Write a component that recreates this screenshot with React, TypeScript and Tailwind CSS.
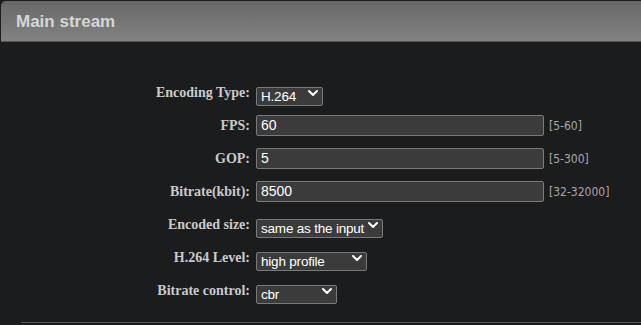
import React from 'react';

const Chevron = () => (
  <svg
    className="pointer-events-none absolute right-[5px] top-1/2 -translate-y-1/2"
    width="10"
    height="7"
    viewBox="0 0 10 7"
    fill="none"
  >
    <path d="M1 1.5 L5 5.5 L9 1.5" stroke="#ffffff" strokeWidth="2" strokeLinecap="round" strokeLinejoin="round" />
  </svg>
);

const Select = ({ value, width, options }: { value: string; width: string; options: string[] }) => (
  <div className={`relative ${width} h-[19px]`}>
    <select
      defaultValue={value}
      className="w-full h-full appearance-none bg-[#3b3b3b] border border-[#7a7a7a] rounded-[2px] text-white text-[13.5px] tracking-[-0.2px] leading-none pl-[4px] pr-[12px] font-['Liberation_Sans',Arial,sans-serif] outline-none"
    >
      {options.map((o) => (
        <option key={o} value={o}>
          {o}
        </option>
      ))}
    </select>
    <Chevron />
  </div>
);

const TextInput = ({ value, hint }: { value: string; hint: string }) => (
  <div className="flex items-center gap-[5px]">
    <input
      defaultValue={value}
      className="w-[288px] h-[21px] bg-[#3b3b3b] border border-[#7a7a7a] rounded-[2px] text-white text-[14px] px-[4px] font-['Liberation_Sans',Arial,sans-serif] outline-none"
    />
    <span className="text-[12px] text-[#a8a8a8] font-['DejaVu_Sans_Condensed','Open_Sans',sans-serif]">{hint}</span>
  </div>
);

const rows: { label: string; field: React.ReactNode }[] = [
  { label: 'Encoding Type:', field: <Select value="H.264" width="w-[67px]" options={['H.264', 'H.265']} /> },
  { label: 'FPS:', field: <TextInput value="60" hint="[5-60]" /> },
  { label: 'GOP:', field: <TextInput value="5" hint="[5-300]" /> },
  { label: 'Bitrate(kbit):', field: <TextInput value="8500" hint="[32-32000]" /> },
  {
    label: 'Encoded size:',
    field: <Select value="same as the input" width="w-[127px]" options={['same as the input', '1920x1080', '1280x720']} />,
  },
  {
    label: 'H.264 Level:',
    field: <Select value="high profile" width="w-[111px]" options={['high profile', 'main profile', 'baseline profile']} />,
  },
  { label: 'Bitrate control:', field: <Select value="cbr" width="w-[81px]" options={['cbr', 'vbr']} /> },
];

export default function App() {
  return (
    <div className="w-[641px] h-[325px] bg-[#1b1c1e] pt-px pl-px overflow-hidden">
      <div className="h-[41px] rounded-tl-[5px] bg-gradient-to-b from-[#686868] to-[#828282] border-b border-[#585858] flex items-center pl-[15px] pt-[2px]">
        <h2 className="text-[17px] font-bold text-[#d6d6d6] font-['Liberation_Sans',Arial,sans-serif]">Main stream</h2>
      </div>
      <div className="pt-[34px] pb-[15px]">
        {rows.map((r) => (
          <div key={r.label} className="grid grid-cols-[249px_1fr] gap-x-[6px] h-[33px] items-center">
            <label className="text-right text-[14px] font-bold text-[#cacaca] font-['Liberation_Serif','Times_New_Roman',serif]">
              {r.label}
            </label>
            <div>{r.field}</div>
          </div>
        ))}
      </div>
      <div className="ml-[20px] border-t border-[#555555]" />
    </div>
  );
}
